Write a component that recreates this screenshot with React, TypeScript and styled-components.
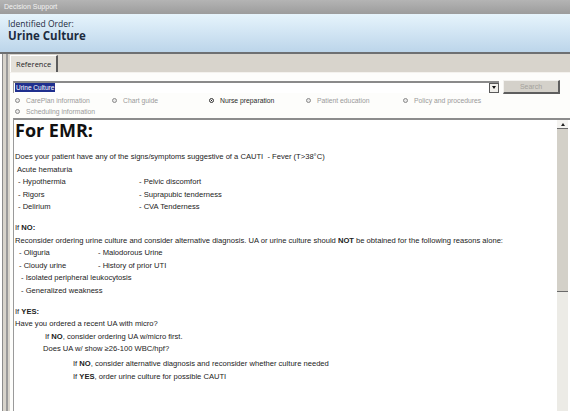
import React from 'react';
import styled, { createGlobalStyle } from 'styled-components';

const GlobalStyle = createGlobalStyle`
    html, body {
        margin: 0;
        padding: 0;
        background: #ffffff;
    }
    body {
        font-family: "Liberation Sans", Arial, sans-serif;
    }
`;

const Window = styled.div`
    width: 570px;
    height: 411px;
    display: flex;
    flex-direction: column;
    overflow: hidden;
    background: #ffffff;
`;

const TitleBar = styled.div`
    height: 14px;
    flex-shrink: 0;
    background: linear-gradient(#b4b4b4, #9c9c9c);
    color: #f2f2f2;
    font-size: 7px;
    line-height: 14px;
    padding-left: 4px;
`;

const Header = styled.div`
    height: 40px;
    flex-shrink: 0;
    background: linear-gradient(#e6f4fc, #bcd5ea);
    border-bottom: 2px solid #6e7072;
    padding: 5px 0 0 8px;
    box-sizing: border-box;
    color: #1d2b3e;
    font-family: "Open Sans", sans-serif;
`;

const OrderLabel = styled.div`
    font-size: 8.5px;
    line-height: 10px;
`;

const OrderName = styled.div`
    font-size: 11.5px;
    font-weight: bold;
    line-height: 13px;
`;

const Frame = styled.div`
    flex: 1;
    display: flex;
    flex-direction: column;
    margin-left: 2px;
    border-left: 1px solid #8c8c8c;
    padding-left: 3px;
    background: #d8d4cc;
    min-height: 0;
`;

const Inner = styled.div`
    flex: 1;
    display: flex;
    flex-direction: column;
    border-left: 2px solid #9a9a9a;
    padding-left: 2px;
    min-height: 0;
`;

const TabStrip = styled.div`
    height: 18px;
    flex-shrink: 0;
    display: flex;
    align-items: flex-end;
    border-bottom: 1px solid #f4f2ee;
`;

const Tab = styled.div`
    height: 16px;
    padding: 0 5px;
    background: #e4e1da;
    border-left: 1px solid #ffffff;
    border-right: 2px solid #5c5c5c;
    border-top: 1px solid #ffffff;
    font-family: "Open Sans", sans-serif;
    font-size: 7.5px;
    line-height: 16px;
    color: #1e1e1e;
`;

const Panel = styled.div`
    flex: 1;
    display: flex;
    flex-direction: column;
    background: #fdfdfb;
    padding: 6px 0 0 3px;
    min-height: 0;
`;

const SearchRow = styled.div`
    display: flex;
    align-items: center;
    gap: 4px;
    height: 15px;
    padding-right: 10px;
`;

const Combo = styled.div`
    flex: 1;
    height: 12px;
    display: flex;
    align-items: center;
    border-top: 2px solid #8a8a8a;
    border-left: 1px solid #9a9a9a;
    background: #ffffff;
    box-sizing: border-box;
`;

const Selected = styled.span`
    background: #1f2f8e;
    color: #ffffff;
    font-size: 6.5px;
    line-height: 9px;
    padding: 0 1px;
    margin-left: 1px;
`;

const DropButton = styled.div`
    margin-left: auto;
    width: 10px;
    height: 10px;
    box-sizing: border-box;
    border: 1px solid #5a5a5a;
    background: #f0efeb;
    display: flex;
    align-items: center;
    justify-content: center;
    &::after {
        content: '';
        border-left: 2.5px solid transparent;
        border-right: 2.5px solid transparent;
        border-top: 3px solid #111;
    }
`;

const SearchButton = styled.div`
    width: 57px;
    height: 14px;
    box-sizing: border-box;
    background: #d4d1ca;
    border-top: 1px solid #f2f1ee;
    border-left: 1px solid #f2f1ee;
    border-right: 2px solid #5e5e5e;
    border-bottom: 2px solid #5e5e5e;
    color: #a4a29c;
    font-size: 7px;
    line-height: 11px;
    text-align: center;
`;

const RadioGrid = styled.div`
    display: grid;
    grid-template-columns: repeat(5, 97px);
    padding: 1px 0 0 2px;
`;

const RadioItem = styled.label<{ $checked?: boolean }>`
    display: flex;
    align-items: center;
    gap: 6px;
    height: 11px;
    font-size: 6.8px;
    color: ${props => props.$checked ? '#2a2a2a' : '#9a9a9a'};
`;

const RadioDot = styled.span<{ $checked?: boolean }>`
    width: 5px;
    height: 5px;
    border-radius: 50%;
    box-sizing: border-box;
    border: 1px solid ${props => props.$checked ? '#333' : '#8a8a8a'};
    background: ${props => props.$checked ? 'radial-gradient(#222 40%, #f4f4f4 45%)' : '#e8e8e8'};
`;

const ContentBox = styled.div`
    flex: 1;
    display: flex;
    margin-top: 1px;
    border-top: 2px solid #8c8c8c;
    border-left: 1px solid #9a9a9a;
    background: #ffffff;
    min-height: 0;
    padding-right: 2px;
`;

const Doc = styled.div`
    flex: 1;
    padding: 0 0 0 1px;
    color: #222222;
    font-size: 7.6px;
    line-height: 12.6px;
`;

const DocTitle = styled.div`
    font-family: "Open Sans", sans-serif;
    font-size: 18px;
    font-weight: bold;
    line-height: 20px;
    color: #111;
    margin-bottom: 11px;
`;

const Section = styled.div<{ $gap?: number }>`
    margin-top: ${props => props.$gap ?? 0}px;
`;

const Line = styled.div<{ $indent?: number }>`
    padding-left: ${props => props.$indent ?? 0}px;
    white-space: nowrap;
`;

const TwoCol = styled.div<{ $col: number; $indent: number }>`
    display: grid;
    grid-template-columns: ${props => props.$col}px auto;
    padding-left: ${props => props.$indent}px;
    white-space: nowrap;
`;

const Scrollbar = styled.div`
    width: 11px;
    display: flex;
    flex-direction: column;
    background: #ecebe6;
`;

const ScrollArrow = styled.div`
    height: 8px;
    display: flex;
    align-items: center;
    justify-content: center;
    background: #f4f3f0;
    &::after {
        content: '';
        border-left: 2px solid transparent;
        border-right: 2px solid transparent;
        border-bottom: 3px solid #222;
    }
`;

const ScrollThumb = styled.div`
    height: 164px;
    background: #d3d0c8;
    border-top: 1px solid #6a6a6a;
    border-bottom: 1px solid #6a6a6a;
    box-sizing: border-box;
`;

const radios = [
    { label: 'CarePlan information' },
    { label: 'Chart guide' },
    { label: 'Nurse preparation', checked: true },
    { label: 'Patient education' },
    { label: 'Policy and procedures' },
    { label: 'Scheduling information' },
];

export default function App() {
    return (
        <>
            <GlobalStyle />
            <Window>
                <TitleBar>Decision Support</TitleBar>
                <Header>
                    <OrderLabel>Identified Order:</OrderLabel>
                    <OrderName>Urine Culture</OrderName>
                </Header>
                <Frame>
                    <Inner>
                        <TabStrip>
                            <Tab>Reference</Tab>
                        </TabStrip>
                        <Panel>
                            <SearchRow>
                                <Combo>
                                    <Selected>Urine Culture</Selected>
                                    <DropButton />
                                </Combo>
                                <SearchButton>Search</SearchButton>
                            </SearchRow>
                            <RadioGrid>
                                {radios.map(r => (
                                    <RadioItem key={r.label} $checked={r.checked}>
                                        <RadioDot $checked={r.checked} />
                                        {r.label}
                                    </RadioItem>
                                ))}
                            </RadioGrid>
                            <ContentBox>
                                <Doc>
                                    <DocTitle>For EMR:</DocTitle>
                                    <Line>Does your patient have any of the signs/symptoms suggestive of a CAUTI&nbsp; - Fever (T&gt;38°C)</Line>
                                    <Line $indent={2}>Acute hematuria</Line>
                                    <TwoCol $col={121} $indent={3}>
                                        <span>- Hypothermia</span><span>- Pelvic discomfort</span>
                                        <span>- Rigors</span><span>- Suprapubic tenderness</span>
                                        <span>- Delirium</span><span>- CVA Tenderness</span>
                                    </TwoCol>
                                    <Section $gap={8}>
                                        <Line>If <b>NO:</b></Line>
                                        <Line>Reconsider ordering urine culture and consider alternative diagnosis. UA or urine culture should <b>NOT</b> be obtained for the following reasons alone:</Line>
                                        <TwoCol $col={79} $indent={4}>
                                            <span>- Oliguria</span><span>- Malodorous Urine</span>
                                            <span>- Cloudy urine</span><span>- History of prior UTI</span>
                                        </TwoCol>
                                        <Line $indent={6}>- Isolated peripheral leukocytosis</Line>
                                        <Line $indent={6}>- Generalized weakness</Line>
                                    </Section>
                                    <Section $gap={8}>
                                        <Line>If <b>YES:</b></Line>
                                        <Line>Have you ordered a recent UA with micro?</Line>
                                        <Line $indent={30}>If <b>NO</b>, consider ordering UA w/micro first.</Line>
                                        <Line $indent={28}>Does UA w/ show ≥26-100 WBC/hpf?</Line>
                                        <Section $gap={2}>
                                            <Line $indent={58}>If <b>NO</b>, consider alternative diagnosis and reconsider whether culture needed</Line>
                                            <Line $indent={58}>If <b>YES</b>, order urine culture for possible CAUTI</Line>
                                        </Section>
                                    </Section>
                                </Doc>
                                <Scrollbar>
                                    <ScrollArrow />
                                    <ScrollThumb />
                                </Scrollbar>
                            </ContentBox>
                        </Panel>
                    </Inner>
                </Frame>
            </Window>
        </>
    );
}
